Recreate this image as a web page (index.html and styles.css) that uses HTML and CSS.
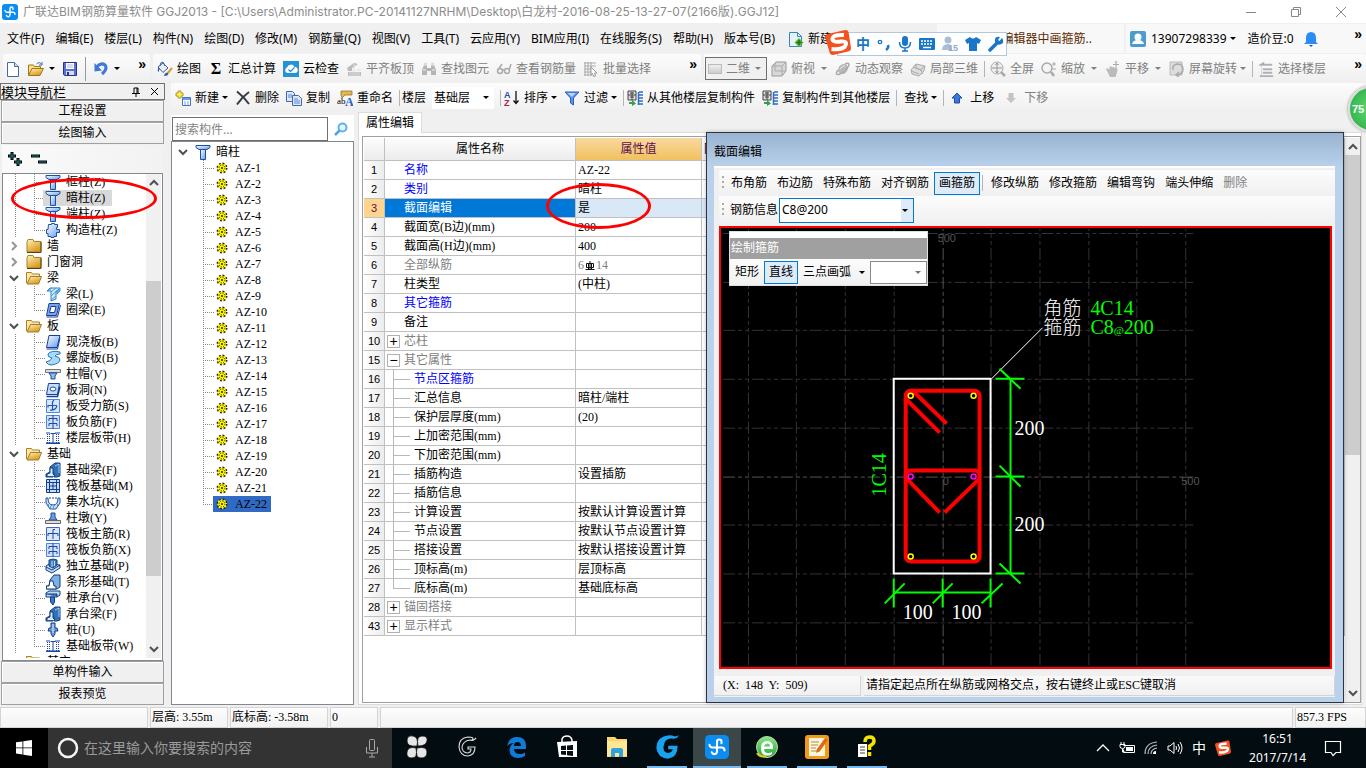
FILE: index.html
```html
<!DOCTYPE html>
<html lang="zh-CN">
<head>
<meta charset="utf-8">
<title>广联达BIM钢筋算量软件 GGJ2013</title>
<link rel="stylesheet" href="styles.css">
</head>
<body>
<svg class="defs" aria-hidden="true">
  <defs>
    <linearGradient id="gb" x1="0" y1="0" x2="1" y2="1"><stop offset="0" stop-color="#fff"/><stop offset="1" stop-color="#5f9af0"/></linearGradient>
    <linearGradient id="gy" x1="0" y1="0" x2="0.6" y2="1"><stop offset="0" stop-color="#fff3b8"/><stop offset="1" stop-color="#d9981c"/></linearGradient>
    <linearGradient id="gg" x1="0" y1="0" x2="0" y2="1"><stop offset="0" stop-color="#8be58a"/><stop offset="1" stop-color="#22a838"/></linearGradient>
  </defs>
  <symbol id="logo" viewBox="0 0 16 16"><rect width="16" height="16" rx="3" fill="#0a8cf0"/><path d="M11 5.500V4.500a1.500 1.500 0 0 0-3 0V11a1.800 1.800 0 0 1-3.500 .5M3 6.500a2 2 0 0 0 2 1.800h6a2 2 0 0 1 2 2" fill="none" stroke="#fff" stroke-width="1.400" stroke-linecap="round"/></symbol>
  <symbol id="new" viewBox="0 0 16 16"><path d="M2.500 1.500h7l4 4v10h-11z" fill="#fff" stroke="#456a9c"/><path d="M9.500 1.500v4h4" fill="#cfe0f5" stroke="#456a9c"/></symbol>
  <symbol id="open" viewBox="0 0 16 16"><path d="M.5 14V4h5l1 1.500h6V8" fill="#f7e08c" stroke="#a07618"/><path d="M.5 14.500L4 7.500h11.500l-3.500 7z" fill="url(#gy)" stroke="#a07618"/><path d="M8.500 3q3-3 5 .5m.5-2.500v3h-3" fill="none" stroke="#3b6aa8"/></symbol>
  <symbol id="save" viewBox="0 0 16 16"><path d="M1.500 1.500h13v13h-12l-1-1z" fill="#5a6fd0" stroke="#26348f"/><path d="M4 2h8v6H4z" fill="#fff"/><path d="M5 4h6M5 6h6" stroke="#aab4e8"/><path d="M4 10h8v4H4z" fill="#d5daf5"/><path d="M5 11h2v3H5z" fill="#26348f"/></symbol>
  <symbol id="undo" viewBox="0 0 16 16"><path d="M3.500 6Q8 1 12 4q3 4-3 9" fill="none" stroke="#3f78d8" stroke-width="3"/><path d="M1.500 2v8.500l7.500-1z" fill="#3f78d8"/></symbol>
  <symbol id="paint" viewBox="0 0 16 16"><path d="M1 6l5-4 5 5-5 4.500z" fill="#e6eefb" stroke="#3b5f95"/><path d="M3 5q0-4 3-4l2 4" fill="none" stroke="#3b5f95"/><path d="M2 7q-1 3 0 3" stroke="#2458c8" fill="none" stroke-width="1.500"/><path d="M15 7l-5 6" stroke="#d9a02c" stroke-width="2"/><path d="M7 15q1-4 4-3 1 3-4 3z" fill="#2c5bb8"/></symbol>
  <symbol id="cloud" viewBox="0 0 16 16"><rect width="16" height="16" fill="#2392d9"/><path d="M4 12a3 3 0 0 1 0-5.500 4 4 0 0 1 7.500-.5A3 3 0 0 1 12 12z" fill="#fff"/><path d="M5.500 8.500l2 2 4-4" stroke="#2392d9" stroke-width="1.300" fill="none"/></symbol>
  <symbol id="align" viewBox="0 0 16 16"><path d="M1 7l7-5 4 1-6 4v3H2zM2 11h13v4H2z" fill="#bbb"/><path d="M3 12h11M3 14h11M8 3v8M11 9h4" stroke="#ddd"/></symbol>
  <symbol id="bino" viewBox="0 0 16 16"><path d="M1 14V9l2-5h3v3h4V4h3l2 5v5h-5v-4H6v4z" fill="#b5b5b5"/><path d="M3 2h3v2H3zM10 2h3v2h-3zM2 9h3M11 9h3" fill="#bbb" stroke="#eee"/></symbol>
  <symbol id="glass" viewBox="0 0 16 16"><g fill="none" stroke="#aaa" stroke-width="1.500"><circle cx="4" cy="10" r="2.500"/><circle cx="11" cy="10" r="2.500"/><path d="M6 9h3M2 9l4-6M13 9l2-6"/></g></symbol>
  <symbol id="batch" viewBox="0 0 16 16"><path d="M1 2h12M1 5h12M1 8h8M1 11h8M1 14h8M2 1v14M5 1v14M8 1v14" stroke="#aaa"/><path d="M8 6l6 6-2.500 0 1 3-2 .5-1-3-1.500 1z" fill="#fff" stroke="#999"/></symbol>
  <symbol id="cube" viewBox="0 0 16 16"><path d="M1 5l4-4h10v9l-4 5H1z" fill="#d8d8d8" stroke="#999"/><path d="M1 5h10v10M11 5l4-4M4 2v8h10" fill="none" stroke="#aaa"/></symbol>
  <symbol id="orbit" viewBox="0 0 16 16"><ellipse cx="8" cy="8" rx="4.500" ry="5.500" transform="rotate(40 8 8)" fill="#b8b8b8"/><path d="M3 9Q-1 15 5 13T14 4q0-3-4-1" fill="none" stroke="#aaa" stroke-width="1.500"/><path d="M5 8q3-4 5-3" stroke="#eee" fill="none"/></symbol>
  <symbol id="part" viewBox="0 0 16 16"><path d="M1 9l5-6 9 2-1 5-5 5-7-2z" fill="#ddd" stroke="#aaa"/><path d="M3 6l8 3 2 4M6 3v4l5 2 3-4M1 10l8 3" fill="none" stroke="#aaa"/></symbol>
  <symbol id="full" viewBox="0 0 16 16"><circle cx="7" cy="7" r="6" fill="#eee" stroke="#aaa"/><path d="M7 2v10M2 7h10M5.500 4L7 2l1.500 2M5.500 10L7 12l1.500-2" stroke="#999" fill="none"/><path d="M11 11l4 4" stroke="#aaa" stroke-width="2.500"/></symbol>
  <symbol id="zoom" viewBox="0 0 16 16"><circle cx="6" cy="7" r="5" fill="#f4f4f4" stroke="#aaa" stroke-width="1.500"/><path d="M10 11l3 4" stroke="#aaa" stroke-width="2.500"/><path d="M11 3h4M13 1v4M11 8h4" stroke="#aaa"/></symbol>
  <symbol id="pan" viewBox="0 0 16 16"><path d="M1 8q2-2 3.500 1V6q2-1.500 2.500 .5 2-1 2.500 .5 3-1 3 2l-1 4-1 3H5z" fill="#bbb"/><path d="M11 0v7M8 3.500h6M10 1.500L11 .5l1 1" stroke="#aaa" fill="none"/></symbol>
  <symbol id="rotate" viewBox="0 0 16 16"><path d="M1 1h12v13H1z" fill="#ddd" stroke="#bbb"/><path d="M4 9q-1-5 4-6 6 0 6 5t-6 6m2-3l-3 3 3 2" fill="none" stroke="#aaa" stroke-width="1.500"/></symbol>
  <symbol id="floors" viewBox="0 0 16 16"><path d="M1 4l5-3v2h8v1.500H1zM5 7.500h9V9H5zM5 11h9v1.500H5zM2 14.500h13V16H2zM3.500 5v10" fill="#aaa" stroke="#bbb" stroke-width=".5"/></symbol>
  <symbol id="add" viewBox="0 0 16 16"><path d="M3 1h3v2h2v3H6v2H3V6H1V3h2z" fill="#ffe94f" stroke="#a38612" stroke-width=".8"/><path d="M7.500 7.500h8v8h-8z" fill="#fff" stroke="#4273c5"/><path d="M8 8h7v2H8z" fill="#6f9ae6"/><path d="M9 12h5M9 14h5" stroke="#7ea2e0" stroke-dasharray="2 1"/></symbol>
  <symbol id="del" viewBox="0 0 16 16"><path d="M2 1.500Q9 7 14 14M14 2Q7 7 2 14.500" fill="none" stroke="#333a48" stroke-width="2"/></symbol>
  <symbol id="copy" viewBox="0 0 16 16"><g fill="#dce9fb" stroke="#3e67b0"><path d="M.5 1.500h6l2 2v8h-8z"/><path d="M6.500 5.500h6l3 3v7h-9z"/></g><path d="M2 5h4M2 7h4M8 9h4M8 11h6M8 13h6" stroke="#5f86c9"/></symbol>
  <symbol id="floorcopy" viewBox="0 0 16 16"><path d="M1 1h8v9H1z" fill="#ddd" stroke="#444"/><path d="M3 3h4M1 5h8M3 7h4M5 2v8" stroke="#444"/><path d="M12 2h4M12 5h4M12 8h4M12 11h4M12 14h4M11.500 2v13" stroke="#2f6fc5" stroke-width="1.500"/><path d="M2 12h3v-2l4 3.500L5 16v-2H2z" fill="#2fa04e"/></symbol>
  <symbol id="funnel" viewBox="0 0 16 16"><path d="M1 2h14L9.500 8v7l-3-2V8z" fill="#5b92ec" stroke="#2a5fc2"/><path d="M3.500 3h8L8 7z" fill="#b9d3fa"/></symbol>
  <symbol id="up" viewBox="0 0 12 12"><path d="M6 1l5 5H8.500v5h-5V6H1z" fill="#3a78e0" stroke="#1f4ea8"/></symbol>
  <symbol id="down" viewBox="0 0 12 12"><path d="M6 11L1 6h2.500V1h5v5H11z" fill="#c4c4c4"/></symbol>
  <symbol id="newdoc" viewBox="0 0 16 16"><path d="M1.500 1.500h8l4 4v10h-12z" fill="#e5f3fd" stroke="#3b84c0"/><path d="M9.500 1.500v4h4" fill="none" stroke="#3b84c0"/><path d="M11 7l4.500 4.500L11 16l-4.500-4.500z" fill="#59b82c"/><path d="M11 9v5M8.500 11.500h5" stroke="#267012" stroke-width="1.500"/></symbol>
  <symbol id="search" viewBox="0 0 16 16"><circle cx="9.500" cy="6.500" r="4" fill="#e8f6ff" stroke="#5cb2ee" stroke-width="2"/><path d="M6.500 9.500L2 14" stroke="#4ba5e6" stroke-width="2.500"/></symbol>
  <symbol id="col" viewBox="0 0 16 16"><path d="M1 1.500h14v2l-3 2H4l-3-2z" fill="url(#gb)" stroke="#1d4f9e"/><path d="M5.500 5.500h5v10h-5z" fill="url(#gb)" stroke="#1d4f9e"/></symbol>
  <symbol id="gcol" viewBox="0 0 16 16"><path d="M3.500 2.500h3v-1h3v1h3v3h-1v2h3v3h-3v4H9v1H6v-1H3v-3H1.500v-4H3z" fill="url(#gb)" stroke="#1d4f9e"/></symbol>
  <symbol id="folder" viewBox="0 0 16 16"><path d="M1 3.500l1-2h5l1 2h7v10.500H1z" fill="url(#gy)" stroke="#a8812a"/><path d="M15 4v10.500H1" fill="none" stroke="#54411a"/></symbol>
  <symbol id="fopen" viewBox="0 0 16 16"><path d="M.5 13V2.500h5l1 1.500h7V7" fill="#fbe7a0" stroke="#a8812a"/><path d="M1 14l3.500-7.500h11L12.500 14z" fill="url(#gy)" stroke="#a07c24"/></symbol>
  <symbol id="beam" viewBox="0 0 16 16"><path d="M2 5l3-3h10l-3 3h-1v8l-5 2V5z" fill="#d2e9fc" stroke="#2b83c6"/><path d="M3 5l4-3M6 6l5-4M6 10l8-7M6 14l5-4M12 5l3-3v3l-3 3z" stroke="#3f97d8" fill="#6bb4ea"/></symbol>
  <symbol id="ring" viewBox="0 0 16 16"><path d="M4 1.500h10.500l-3 12H1.500z" fill="#7aa5ec" stroke="#153e9b"/><path d="M6 4.500h5l-1.500 6H4.500z" fill="#fff" stroke="#153e9b"/><path d="M1.500 15h11l3-12" fill="none" stroke="#153e9b"/></symbol>
  <symbol id="slab" viewBox="0 0 16 16"><path d="M4 1.500h11l-3 12H1.500z" fill="url(#gb)" stroke="#153e9b"/><path d="M1.500 15h11l2.500-11" fill="none" stroke="#153e9b"/></symbol>
  <symbol id="spiral" viewBox="0 0 16 16"><path d="M15 2Q6 0 3 4q-1 3 4 4-1 3-6 4 2 3 5 3 8-1 9-5 0-3-5-4 1-2 5-2z" fill="#a9dafc" stroke="#1e79ba"/></symbol>
  <symbol id="cap" viewBox="0 0 16 16"><path d="M.5 3.500h15v3H.5z" fill="#ddd" stroke="#777"/><path d="M4 7h8l-2 3v3H6v-3z" fill="#90b9ee" stroke="#1b4ba0"/></symbol>
  <symbol id="hole" viewBox="0 0 16 16"><path d="M3.500 1.500h11l-2 11H1.500z" fill="#c4ddfa" stroke="#153e9b"/><ellipse cx="8" cy="7" rx="3" ry="2" fill="#fff" stroke="#1b4ba0"/><path d="M1.500 14.500h11l2.500-10" fill="none" stroke="#153e9b" stroke-width="1.500"/></symbol>
  <symbol id="bar1" viewBox="0 0 16 16"><path d="M1.500 1.500h13v13h-13z" fill="#d7e6fb" stroke="#5384db"/><path d="M9 2L7.500 4V12M3 9.500V7.500h9M5 12q5 1 7-4" fill="none" stroke="#1a56b5" stroke-width="1.200"/></symbol>
  <symbol id="bar2" viewBox="0 0 16 16"><path d="M1.500 1.500h13v13h-13z" fill="#cfe0fa" stroke="#5384db"/><path d="M8 1v14M4 7V4.500h8V7M4 12V9.500h8V12" fill="none" stroke="#1a46a5"/></symbol>
  <symbol id="strip" viewBox="0 0 16 16"><path d="M1 12h14v2H1z" fill="#6d97e0"/><path d="M1 3h4M10 3h5M1 13.500h14M8 4v9M5.500 3.500h5" stroke="#1a46a5"/><path d="M2.500 4v9M4.500 4v9M11.500 4v9M13.500 4v9" stroke="#1a46a5" stroke-dasharray="1 1"/></symbol>
  <symbol id="fbeam" viewBox="0 0 16 16"><path d="M1 15V12l4-2V5l5-4h5v13l-3 1H9v-4l-1-1v5z" fill="#2f72b8" stroke="#123f7f"/><path d="M2 14v-2l3-1V6h3v6l2 2" fill="#d9ebfb" stroke="#123f7f"/><path d="M10 4l4-2v9" fill="none" stroke="#a5cff5"/></symbol>
  <symbol id="raft" viewBox="0 0 16 16"><path d="M1.500 1.500h13v13h-13z" fill="#c6dcf8" stroke="#123f8f"/><path d="M4.500 1v14M11.500 1v14M1 4.500h14M1 11.500h14M8 4v8M4 8h8" stroke="#123f8f"/></symbol>
  <symbol id="pit" viewBox="0 0 16 16"><path d="M1 4h2q0 7 5 7t5-7h2v5l-4 6H5L1 9z" fill="#c6dcf8" stroke="#1d58a8"/><path d="M4 4h8" stroke="#123f8f" stroke-dasharray="2 1"/><path d="M3 11h10M5 13h6" stroke="#1d58a8" stroke-dasharray="1 2"/></symbol>
  <symbol id="pier" viewBox="0 0 16 16"><path d="M6 3h4v4l2 3H4l2-3z" fill="#6b9ae0" stroke="#1b4ba0"/><path d="M.5 10.500h15v3H.5z" fill="#ddd" stroke="#666"/></symbol>
  <symbol id="rmain" viewBox="0 0 16 16"><path d="M1.500 1.500h13v13h-13z" fill="#dbe8fc" stroke="#3a68c8"/><path d="M10 3.500H8V13M3 10V7.500h10V10" fill="none" stroke="#1a46a5"/></symbol>
  <symbol id="iso" viewBox="0 0 16 16"><path d="M1 8l3-2 11 1v3l-8 5-6-3z" fill="#bfdcf8" stroke="#123f7f"/><path d="M4 2l4-1 4 1v5l-4 3-4-2z" fill="#3b78be" stroke="#123f7f"/><path d="M7 3v6M9.500 3v5" fill="none" stroke="#bfdcf8"/><path d="M1 9l6 3 8-5" fill="none" stroke="#123f7f"/></symbol>
  <symbol id="stripf" viewBox="0 0 16 16"><path d="M1.500 15v-3H4l1-6 4-5h6l0 12-3 2z" fill="#7fb0e6" stroke="#123f7f"/><path d="M1.500 15v-3H4l1-5h3l1 5h2v3z" fill="#fff" stroke="#123f7f"/></symbol>
  <symbol id="pcap" viewBox="0 0 16 16"><path d="M1 3l3-2h11v4l-3 2H1z" fill="#bcd9f8" stroke="#123f7f"/><path d="M1 4h11v3M5.500 7h4v5L8 15l-2.500-3z" fill="#3b78be" stroke="#123f7f"/></symbol>
  <symbol id="pile" viewBox="0 0 16 16"><path d="M6 1h4v5h2l1 3h-3v3l-2 3-2-3V9H3l1-3h2z" fill="#6f9fe0" stroke="#123f7f"/><path d="M8 2v9" stroke="#d8e8fa"/></symbol>
  <symbol id="gear" viewBox="0 0 12 12"><circle cx="6" cy="6" r="4.800" fill="#ff0" stroke="#222" stroke-width="1.400" stroke-dasharray="1.900 1.870"/><circle cx="6" cy="6" r="3" fill="#fff200" stroke="#333000" stroke-width="1" stroke-dasharray="1.200 1.150"/><circle cx="6" cy="6" r="1" fill="#222"/></symbol>
  <symbol id="chev" viewBox="0 0 10 10"><path d="M1 3l4 4 4-4" fill="none" stroke="#505050" stroke-width="2"/></symbol>
  <symbol id="sogou" viewBox="0 0 26 26"><path d="M3 5L20 1q3-.5 3.500 2L26 19q0 3-3 3.500L8 26q-3 0-3.500-3L0 8q0-2.500 3-3z" fill="#f4511e"/><path d="M19 6Q8 5.500 7.500 9.500t8 3 4 5.500Q15 21 6.500 20" fill="none" stroke="#fff" stroke-width="4"/></symbol>
</svg>

<header class="titlebar">
  <svg class="i16"><use href="#logo"/></svg>
  <h1>广联达BIM钢筋算量软件 GGJ2013 - [C:\Users\Administrator.PC-20141127NRHM\Desktop\白龙村-2016-08-25-13-27-07(2166版).GGJ12]</h1>
  <div class="winbtns">
    <button aria-label="最小化"><svg width="12" height="12"><path d="M1 6.500h10" stroke="#888"/></svg></button>
    <button aria-label="还原"><svg width="12" height="12"><path d="M1.500 3.500h7v7h-7zM3.500 3.500v-2h7v7h-2" fill="none" stroke="#888"/></svg></button>
    <button aria-label="关闭"><svg width="12" height="12"><path d="M1 1l10 10M11 1L1 11" stroke="#888"/></svg></button>
  </div>
</header>

<div class="menurow">
  <nav class="menu">
    <button>文件(F)</button><button>编辑(E)</button><button>楼层(L)</button><button>构件(N)</button><button>绘图(D)</button><button>修改(M)</button><button>钢筋量(Q)</button><button>视图(V)</button><button>工具(T)</button><button>云应用(Y)</button><button>BIM应用(I)</button><button>在线服务(S)</button><button>帮助(H)</button><button>版本号(B)</button>
  </nav>
  <button class="tb newchange"><svg class="i16"><use href="#newdoc"/></svg>新建</button>
  <div class="notice"><a href="#">编辑器中画箍筋..</a></div>
  <div class="account">
    <svg class="i16" viewBox="0 0 16 16"><rect width="16" height="16" rx="2" fill="#4a9cce"/><circle cx="8" cy="6" r="3.500" fill="#fff"/><path d="M2 13q1-4 6-4t6 4z" fill="#fff"/></svg>
    <button class="dd">13907298339</button><span>造价豆:0</span>
    <svg class="i16" viewBox="0 0 16 16"><path d="M8 1q5 0 5 6v4l2 2H1l2-2V7q0-6 5-6z" fill="#2b8cf5"/><path d="M6 14h4l-2 2z" fill="#1b5fb5"/></svg>
    <button class="more">»</button>
  </div>
</div>

<div class="toolrow">
  <div class="bar file">
    <button aria-label="新建"><svg class="i16"><use href="#new"/></svg></button>
    <button class="dd" aria-label="打开"><svg class="i16"><use href="#open"/></svg></button>
    <button aria-label="保存"><svg class="i16"><use href="#save"/></svg></button>
    <i class="sep"></i>
    <button class="dd" aria-label="撤销"><svg class="i16"><use href="#undo"/></svg></button>
    <button class="more">»</button>
  </div>
  <div class="bar draw">
    <button class="tb"><svg class="i16"><use href="#paint"/></svg>绘图</button>
    <button class="tb"><b class="sigma">Σ</b>汇总计算</button>
    <button class="tb"><svg class="i16"><use href="#cloud"/></svg>云检查</button>
    <button class="tb off"><svg class="i16"><use href="#align"/></svg>平齐板顶</button>
    <button class="tb off"><svg class="i16"><use href="#bino"/></svg>查找图元</button>
    <button class="tb off"><svg class="i16"><use href="#glass"/></svg>查看钢筋量</button>
    <button class="tb off"><svg class="i16"><use href="#batch"/></svg>批量选择</button>
    <button class="more">»</button>
  </div>
  <div class="bar view">
    <span class="combo dim"><i></i><select aria-label="视图维度"><option>二维</option></select></span>
    <button class="tb off dd"><svg class="i16"><use href="#cube"/></svg>俯视</button>
    <button class="tb off"><svg class="i16"><use href="#orbit"/></svg>动态观察</button>
    <button class="tb off"><svg class="i16"><use href="#part"/></svg>局部三维</button>
    <i class="sep"></i>
    <button class="tb off"><svg class="i16"><use href="#full"/></svg>全屏</button>
    <button class="tb off dd"><svg class="i16"><use href="#zoom"/></svg>缩放</button>
    <button class="tb off dd"><svg class="i16"><use href="#pan"/></svg>平移</button>
    <button class="tb off dd tight"><svg class="i16"><use href="#rotate"/></svg>屏幕旋转</button>
    <i class="sep"></i>
    <button class="tb off"><svg class="i16"><use href="#floors"/></svg>选择楼层</button>
    <button class="more">»</button>
  </div>
</div>

<main class="main">
  <aside class="nav">
    <div class="navhead"><span>模块导航栏</span>
      <button aria-label="固定"><svg width="10" height="10"><path d="M3 1h4v5M3 1v5M1 6.500h8M5 7v3M6 1v5" stroke="#000" fill="none"/></svg></button>
      <button aria-label="关闭"><svg width="9" height="9"><path d="M1 1l7 7M8 1L1 8" stroke="#000"/></svg></button>
    </div>
    <button class="navbtn">工程设置</button>
    <button class="navbtn">绘图输入</button>
    <div class="navtools">
      <button aria-label="全部展开"><svg width="17" height="16"><path d="M5 1v8M1 5h8M11 7v8M7 11h8" stroke="#000" stroke-width="3"/><path d="M5 2v6M2 5h6M11 8v6M8 11h6" stroke="#0b8b80"/></svg></button>
      <button aria-label="全部折叠"><svg width="17" height="16"><path d="M1 5h9M8 11h9" stroke="#000" stroke-width="3"/><path d="M2 5h7M9 11h7" stroke="#0b8b80"/></svg></button>
    </div>
    <div class="treebox">
      <ul class="tree">
        <li class="leaf"><svg class="i16"><use href="#col"/></svg>框柱<span class="en">(Z)</span></li>
        <li class="leaf cur"><svg class="i16"><use href="#col"/></svg>暗柱<span class="en">(Z)</span></li>
        <li class="leaf"><svg class="i16"><use href="#col"/></svg>端柱<span class="en">(Z)</span></li>
        <li class="leaf last"><svg class="i16"><use href="#gcol"/></svg>构造柱<span class="en">(Z)</span></li>
        <li class="group shut"><svg class="exp"><use href="#chev"/></svg><svg class="i16"><use href="#folder"/></svg>墙</li>
        <li class="group shut"><svg class="exp"><use href="#chev"/></svg><svg class="i16"><use href="#folder"/></svg>门窗洞</li>
        <li class="group"><svg class="exp"><use href="#chev"/></svg><svg class="i16"><use href="#fopen"/></svg>梁</li>
        <li class="leaf"><svg class="i16"><use href="#beam"/></svg>梁<span class="en">(L)</span></li>
        <li class="leaf last"><svg class="i16"><use href="#ring"/></svg>圈梁<span class="en">(E)</span></li>
        <li class="group"><svg class="exp"><use href="#chev"/></svg><svg class="i16"><use href="#fopen"/></svg>板</li>
        <li class="leaf"><svg class="i16"><use href="#slab"/></svg>现浇板<span class="en">(B)</span></li>
        <li class="leaf"><svg class="i16"><use href="#spiral"/></svg>螺旋板<span class="en">(B)</span></li>
        <li class="leaf"><svg class="i16"><use href="#cap"/></svg>柱帽<span class="en">(V)</span></li>
        <li class="leaf"><svg class="i16"><use href="#hole"/></svg>板洞<span class="en">(N)</span></li>
        <li class="leaf"><svg class="i16"><use href="#bar1"/></svg>板受力筋<span class="en">(S)</span></li>
        <li class="leaf"><svg class="i16"><use href="#bar2"/></svg>板负筋<span class="en">(F)</span></li>
        <li class="leaf last"><svg class="i16"><use href="#strip"/></svg>楼层板带<span class="en">(H)</span></li>
        <li class="group"><svg class="exp"><use href="#chev"/></svg><svg class="i16"><use href="#fopen"/></svg>基础</li>
        <li class="leaf"><svg class="i16"><use href="#fbeam"/></svg>基础梁<span class="en">(F)</span></li>
        <li class="leaf"><svg class="i16"><use href="#raft"/></svg>筏板基础<span class="en">(M)</span></li>
        <li class="leaf"><svg class="i16"><use href="#pit"/></svg>集水坑<span class="en">(K)</span></li>
        <li class="leaf"><svg class="i16"><use href="#pier"/></svg>柱墩<span class="en">(Y)</span></li>
        <li class="leaf"><svg class="i16"><use href="#rmain"/></svg>筏板主筋<span class="en">(R)</span></li>
        <li class="leaf"><svg class="i16"><use href="#bar2"/></svg>筏板负筋<span class="en">(X)</span></li>
        <li class="leaf"><svg class="i16"><use href="#iso"/></svg>独立基础<span class="en">(P)</span></li>
        <li class="leaf"><svg class="i16"><use href="#stripf"/></svg>条形基础<span class="en">(T)</span></li>
        <li class="leaf"><svg class="i16"><use href="#pcap"/></svg>桩承台<span class="en">(V)</span></li>
        <li class="leaf"><svg class="i16"><use href="#fbeam"/></svg>承台梁<span class="en">(F)</span></li>
        <li class="leaf"><svg class="i16"><use href="#pile"/></svg>桩<span class="en">(U)</span></li>
        <li class="leaf last"><svg class="i16"><use href="#strip"/></svg>基础板带<span class="en">(W)</span></li>
        <li class="group"><svg class="exp"></svg><svg class="i16"><use href="#fopen"/></svg>其它</li>
      </ul>
      <div class="scroll"><svg class="exp flip"><use href="#chev"/></svg><i class="thumb navthumb"></i><svg class="exp"><use href="#chev"/></svg></div>
    </div>
    <button class="navbtn">单构件输入</button>
    <button class="navbtn">报表预览</button>
  </aside>

  <section class="work">
    <div class="bar comp">
      <button class="tb dd tight"><svg class="i16"><use href="#add"/></svg>新建</button>
      <button class="tb"><svg class="i16"><use href="#del"/></svg>删除</button>
      <button class="tb"><svg class="i16"><use href="#copy"/></svg>复制</button>
      <button class="tb"><svg class="i16" viewBox="0 0 16 16"><path d="M4 1h11v4H8L5 8l-1-3z" fill="#e3b84d" stroke="#8a671b" stroke-width=".7"/><text x="0" y="14" font-size="9" font-family="Liberation Serif">ab</text><text x="8" y="15.500" font-size="12" font-weight="bold" fill="#245dc7" font-family="Liberation Serif">A</text></svg>重命名</button>
      <i class="sep"></i>
      <label class="floor" for="floor">楼层</label>
      <span class="combo flat"><select id="floor"><option>基础层</option></select></span>
      <i class="sep"></i>
      <button class="tb dd tight"><svg class="i16" viewBox="0 0 16 16"><text x="0" y="7.500" font-size="9" font-weight="bold" fill="#244db0" font-family="Liberation Sans">A</text><text x="0" y="15.500" font-size="9" font-weight="bold" fill="#a2284a" font-family="Liberation Sans">Z</text><path d="M12 1v12M9.500 10.500l2.500 3 2.500-3" fill="none" stroke="#111" stroke-width="1.300"/></svg>排序</button>
      <button class="tb dd tight"><svg class="i16"><use href="#funnel"/></svg>过滤</button>
      <i class="sep"></i>
      <button class="tb"><svg class="i16"><use href="#floorcopy"/></svg>从其他楼层复制构件</button>
      <button class="tb"><svg class="i16"><use href="#floorcopy"/></svg>复制构件到其他楼层</button>
      <i class="sep"></i>
      <button class="tb dd tight plain">查找</button>
      <i class="sep"></i>
      <button class="tb move"><svg class="i12"><use href="#up"/></svg>上移</button>
      <button class="tb move off"><svg class="i12"><use href="#down"/></svg>下移</button>
    </div>

    <div class="panes">
      <section class="complist">
        <div class="find"><input type="text" aria-label="搜索构件" placeholder="搜索构件..."><button aria-label="搜索"><svg class="i16"><use href="#search"/></svg></button></div>
        <ul class="items">
          <li class="root"><svg class="exp"><use href="#chev"/></svg><svg class="i16"><use href="#col"/></svg>暗柱</li>
          <li><svg class="i12"><use href="#gear"/></svg><span>AZ-1</span></li>
          <li><svg class="i12"><use href="#gear"/></svg><span>AZ-2</span></li>
          <li><svg class="i12"><use href="#gear"/></svg><span>AZ-3</span></li>
          <li><svg class="i12"><use href="#gear"/></svg><span>AZ-4</span></li>
          <li><svg class="i12"><use href="#gear"/></svg><span>AZ-5</span></li>
          <li><svg class="i12"><use href="#gear"/></svg><span>AZ-6</span></li>
          <li><svg class="i12"><use href="#gear"/></svg><span>AZ-7</span></li>
          <li><svg class="i12"><use href="#gear"/></svg><span>AZ-8</span></li>
          <li><svg class="i12"><use href="#gear"/></svg><span>AZ-9</span></li>
          <li><svg class="i12"><use href="#gear"/></svg><span>AZ-10</span></li>
          <li><svg class="i12"><use href="#gear"/></svg><span>AZ-11</span></li>
          <li><svg class="i12"><use href="#gear"/></svg><span>AZ-12</span></li>
          <li><svg class="i12"><use href="#gear"/></svg><span>AZ-13</span></li>
          <li><svg class="i12"><use href="#gear"/></svg><span>AZ-14</span></li>
          <li><svg class="i12"><use href="#gear"/></svg><span>AZ-15</span></li>
          <li><svg class="i12"><use href="#gear"/></svg><span>AZ-16</span></li>
          <li><svg class="i12"><use href="#gear"/></svg><span>AZ-17</span></li>
          <li><svg class="i12"><use href="#gear"/></svg><span>AZ-18</span></li>
          <li><svg class="i12"><use href="#gear"/></svg><span>AZ-19</span></li>
          <li><svg class="i12"><use href="#gear"/></svg><span>AZ-20</span></li>
          <li><svg class="i12"><use href="#gear"/></svg><span>AZ-21</span></li>
          <li class="last picked"><svg class="i12"><use href="#gear"/></svg><span>AZ-22</span></li>
        </ul>
      </section>

      <section class="props">
        <button class="tab">属性编辑</button>
        <div class="page"><div class="gridbox">
          <table class="grid">
            <colgroup><col class="c1"><col class="c2"><col class="c3"><col></colgroup>
            <thead><tr><th></th><th>属性名称</th><th class="hot">属性值</th><th class="extra">附加</th></tr></thead>
            <tbody>
              <tr><th>1</th><td class="blue">名称</td><td><span class="en">AZ-22</span></td><td></td></tr>
              <tr><th>2</th><td class="blue">类别</td><td>暗柱</td><td></td></tr>
              <tr class="sel"><th>3</th><td>截面编辑</td><td>是</td><td></td></tr>
              <tr><th>4</th><td>截面宽<span class="en">(B</span>边<span class="en">)(mm)</span></td><td><span class="en">200</span></td><td></td></tr>
              <tr><th>5</th><td>截面高<span class="en">(H</span>边<span class="en">)(mm)</span></td><td><span class="en">400</span></td><td></td></tr>
              <tr><th>6</th><td class="gray">全部纵筋</td><td class="gray"><span class="en">6</span><svg class="rebar" viewBox="0 0 12 12"><path d="M2.500 3.500h7v4h-7zM6 1v9M1.500 9.500h9M4.500 3v6M7.500 3v6" fill="none" stroke="#111"/></svg><span class="en">14</span></td><td></td></tr>
              <tr><th>7</th><td>柱类型</td><td><span class="en">(</span>中柱<span class="en">)</span></td><td></td></tr>
              <tr><th>8</th><td class="blue">其它箍筋</td><td></td><td></td></tr>
              <tr><th>9</th><td>备注</td><td></td><td></td></tr>
              <tr><th>10</th><td class="gray node"><button>+</button>芯柱</td><td></td><td></td></tr>
              <tr><th>15</th><td class="gray node"><button>−</button>其它属性</td><td></td><td></td></tr>
              <tr class="sub"><th>16</th><td class="blue">节点区箍筋</td><td></td><td></td></tr>
              <tr class="sub"><th>17</th><td>汇总信息</td><td>暗柱<span class="en">/</span>端柱</td><td></td></tr>
              <tr class="sub"><th>18</th><td>保护层厚度<span class="en">(mm)</span></td><td><span class="en">(20)</span></td><td></td></tr>
              <tr class="sub"><th>19</th><td>上加密范围<span class="en">(mm)</span></td><td></td><td></td></tr>
              <tr class="sub"><th>20</th><td>下加密范围<span class="en">(mm)</span></td><td></td><td></td></tr>
              <tr class="sub"><th>21</th><td>插筋构造</td><td>设置插筋</td><td></td></tr>
              <tr class="sub"><th>22</th><td>插筋信息</td><td></td><td></td></tr>
              <tr class="sub"><th>23</th><td>计算设置</td><td>按默认计算设置计算</td><td></td></tr>
              <tr class="sub"><th>24</th><td>节点设置</td><td>按默认节点设置计算</td><td></td></tr>
              <tr class="sub"><th>25</th><td>搭接设置</td><td>按默认搭接设置计算</td><td></td></tr>
              <tr class="sub"><th>26</th><td>顶标高<span class="en">(m)</span></td><td>层顶标高</td><td></td></tr>
              <tr class="sub end"><th>27</th><td>底标高<span class="en">(m)</span></td><td>基础底标高</td><td></td></tr>
              <tr><th>28</th><td class="gray node"><button>+</button>锚固搭接</td><td></td><td></td></tr>
              <tr><th>43</th><td class="gray node"><button>+</button>显示样式</td><td></td><td></td></tr>
            </tbody>
          </table>
          <div class="scroll"><svg class="exp flip"><use href="#chev"/></svg><i class="thumb gridthumb"></i><svg class="exp"><use href="#chev"/></svg></div>
        </div></div>
      </section>
    </div>
  </section>

  <section class="dialog" role="dialog" aria-labelledby="dlg">
    <h2 id="dlg">截面编辑</h2>
    <div class="body">
      <div class="dbar">
        <i class="grip"></i>
        <button>布角筋</button><button>布边筋</button><button>特殊布筋</button><button>对齐钢筋</button><button class="on">画箍筋</button><i class="sep"></i><button>修改纵筋</button><button>修改箍筋</button><button>编辑弯钩</button><button>端头伸缩</button><button class="off">删除</button>
      </div>
      <div class="dbar info">
        <i class="grip"></i>
        <label for="rebar">钢筋信息</label>
        <span class="combo focus"><select id="rebar"><option>C8@200</option></select></span>
      </div>
      <div class="canvas">
        <svg viewBox="721 228 610 438" preserveAspectRatio="xMinYMin meet">
          <g stroke="#333" stroke-dasharray="12 3 4 3 4 3">
            <path d="M723 233.500h471M723 282.500h471M723 330.500h471M723 379.500h471M723 428.500h471M723 525.500h471M723 574.500h471M723 623.500h471"/>
            <path d="M748.500 666V229M796.500 666V229M845.500 666V229M894.500 666V229M991.500 666V229M1040.500 666V229M1089.500 666V229M1137.500 666V229M1186.500 666V229"/>
            <path d="M723 477.500h471M943.500 666V229" stroke="#555"/>
          </g>
          <g class="axis"><text x="938" y="242">500</text><text x="943" y="485">0</text><text x="1182" y="485">500</text></g>
          <path d="M894 379h97v195h-97z" fill="none" stroke="#fff" stroke-width="2"/>
          <path d="M992 379L1043 328" stroke="#fff"/>
          <g fill="none" stroke="red" stroke-width="4">
            <rect x="906" y="391" width="74" height="171" rx="5"/>
            <path d="M906 476q0-5 5-5h64q5 0 5 5M907 400l33 33M914 392l33 32M907 479l33 34M979 480l-34 33"/>
          </g>
          <g fill="none" stroke="#ff0" stroke-width="1.500"><circle cx="911" cy="396" r="2.500"/><circle cx="974" cy="396" r="2.500"/><circle cx="911" cy="557" r="2.500"/><circle cx="974" cy="557" r="2.500"/></g>
          <g fill="none" stroke="#f0f" stroke-width="1.500"><circle cx="911" cy="477" r="2.500"/><circle cx="974" cy="477" r="2.500"/></g>
          <g stroke="#0f0" stroke-width="2">
            <path d="M1011 379v195M996 379h29M996 477h29M996 574h29M894 593h97M894 579v29M943 579v29M991 579v29"/>
            <path d="M1000 369l21 20M1000 466l21 21M1000 564l21 20M885 604l20-20M933 604l20-20M982 604l21-20"/>
          </g>
          <g class="cad"><text x="1015" y="435">200</text><text x="1015" y="532">200</text><text x="903" y="620">100</text><text x="952" y="620">100</text>
          <text class="han" x="1044" y="315">角筋</text><text class="han" x="1044" y="334">箍筋</text>
          <g fill="#0f0"><text x="1091" y="315">4C14</text><text x="1091" y="334">C8<tspan class="at">@</tspan>200</text><text transform="translate(886 497) rotate(-90)">1C14</text></g></g>
        </svg>
        <div class="palette">
          <h3>绘制箍筋</h3>
          <div class="dbar"><button>矩形</button><button class="on">直线</button><button class="dd">三点画弧</button><span class="combo arc"><select aria-label="弧参数"><option></option></select></span></div>
        </div>
      </div>
      <div class="dstatus"><span class="en">(X:  148  Y:  509)</span><span class="hint">请指定起点所在纵筋或网格交点，按右键终止或<span class="en">ESC</span>键取消</span></div>
    </div>
  </section>
</main>

<footer class="status">
  <span class="s1"></span><span class="s2">层高<b class="en">: 3.55m</b></span><span class="s3">底标高<b class="en">: -3.58m</b></span><span class="s4"><b class="en">0</b></span><span class="s5"></span><span class="s6"><b class="en">857.3 FPS</b></span>
</footer>

<footer class="taskbar">
  <button class="start" aria-label="开始"><svg width="16" height="16"><path d="M0 2.300L6.500 1.400V7.500H0zM7.300 1.200L16 0v7.500H7.300zM0 8.300h6.500v6.200L0 13.600zM7.300 8.300H16V16l-8.700-1.300z" fill="#fff"/></svg></button>
  <div class="cortana"><svg width="22" height="22"><circle cx="11" cy="11" r="9" fill="none" stroke="#f4f4f4" stroke-width="2.500"/></svg><input type="text" aria-label="搜索" placeholder="在这里输入你要搜索的内容"><svg width="12" height="20"><rect x="3.500" y="1.500" width="5" height="11" rx="1" fill="none" stroke="#aaa"/><path d="M.5 9v6h11V9M6 15v4M3 19h6" fill="none" stroke="#aaa"/></svg></div>
  <div class="apps">
    <button aria-label="浏览器"><svg width="24" height="24" viewBox="0 0 24 24"><g fill="#e6e6e6" stroke="#111" stroke-width=".8"><path d="M12 11Q2 12 2 6t6-5 4 10z"/><path d="M13 11Q11 1 17 1t5 5-9 5z"/><path d="M12 13Q22 11 22 17t-6 6-4-10z"/><path d="M11 13Q13 23 7 23t-5-6 9-4z"/></g></svg></button>
    <button aria-label="广联达助手"><svg width="22" height="22" viewBox="0 0 22 22"><path d="M20 2q-1 2-4 2Q19 1 12 1 3 2 3 11q1 9 9 9 7-1 7-9h-7v2h3q0 4-4 4-5-1-5-6 1-6 8-7 3 1 5-1z" fill="none" stroke="#ddd" stroke-width="1.100"/></svg></button>
    <button aria-label="Edge"><svg width="22" height="22" viewBox="0 0 22 22"><path d="M1 10Q3 1 11 1q9 0 9 9v3H8q0 5 6 5 3 0 5-1.500V20q-3 2-7 2-8 0-8.500-8Q4 9 8 7q-4 0-7 3zM8 10h7q0-4-3.500-4T8 10z" fill="#0f7cdb" fill-rule="evenodd"/></svg></button>
    <button aria-label="应用商店"><svg width="22" height="24" viewBox="0 0 22 24"><path d="M1 7l20-1v16L3 22z" fill="#fff"/><path d="M6 8V4q1-3 5-3t5 4v3" fill="none" stroke="#fff" stroke-width="1.500"/><path d="M5 11l5-.5V15H5zM11 10.500l6-.5v5h-6zM5 16h5v4l-5-.5zM11 16h6v5l-6-.7z" fill="#071014"/></svg></button>
    <button aria-label="文件管理"><svg width="22" height="22" viewBox="0 0 22 22"><path d="M1 1h8l2 2h10v18H1z" fill="#fbd86c"/><path d="M1 5h20v15H1z" fill="#ffe694"/><path d="M5 21v-7q0-2 2-2h8q2 0 2 2v7h-4v-4H9v4z" fill="#2fa3dc"/></svg></button>
    <button class="run" aria-label="广联达"><svg width="26" height="26" viewBox="0 0 22 22"><path d="M21 1q-1 3-5 3-7-1-8 7 0 5 4 5 3 0 4-3h-4v-3h8q0 10-8 11Q3 20 2 12 2 2 13 1q3 0 4 1 2 0 4-1z" fill="#19a2ee"/></svg></button>
    <button class="run active" aria-label="钢筋算量"><svg width="24" height="24"><use href="#logo"/></svg></button>
    <button class="run" aria-label="360浏览器"><svg width="24" height="24" viewBox="0 0 24 24"><circle cx="12" cy="12" r="10.500" fill="url(#gg)" stroke="#b7dfa2"/><path d="M18 14H9q0 4 4 4 3 0 4-1v2q-2 2-6 1.500Q6 20 6 13q0-7 6.500-7 6 0 5.500 8zM9 11.500h6q0-3-2.500-3T9 11.500z" fill="#fff" fill-rule="evenodd"/><path d="M2 18Q5 23 11 21" stroke="#f0c419" fill="none" stroke-width="2"/></svg></button>
    <button class="run" aria-label="笔记"><svg width="24" height="24" viewBox="0 0 24 24"><rect width="24" height="24" rx="3" fill="#f39a18"/><path d="M4 3h16v18H4z" fill="#fff6dd"/><path d="M6 7h8M6 10h7M6 13h5M6 16h9" stroke="#a98a4a"/><path d="M20 3l-8 11-1 4 4-2 8-11z" fill="#e06a13"/></svg></button>
    <button class="run" aria-label="帮助"><svg width="24" height="24" viewBox="0 0 24 24"><path d="M3 9h9v13H3z" fill="#fff"/><path d="M5 12h5M5 15h5M5 18h5" stroke="#444"/><path d="M10 7q0-5 4.500-5T19 6q0 3-4.500 5v4M14.500 17v4" fill="none" stroke="#f5e400" stroke-width="3.500"/></svg></button>
  </div>
  <div class="tray">
    <svg width="14" height="14" viewBox="0 0 14 14"><path d="M1 10l6-6 6 6" fill="none" stroke="#fff" stroke-width="1.300"/></svg>
    <svg width="16" height="14" viewBox="0 0 16 14"><path d="M4.500 4.500h11v7h-11v-3M2 1v2M5 1v2M1 3.500h5v2q0 2-2.500 2T1 5.500zM3.500 8v3h3" fill="none" stroke="#fff"/><path d="M7 6h7v4H7z" fill="#fff"/></svg>
    <svg width="14" height="14" viewBox="0 0 14 14"><g fill="none" stroke="#bbb" stroke-width="1.200"><path d="M1 13Q1 2 13 1M4 13q0-8 9-9M7 13q0-5 6-6"/></g><path d="M9 13q0-3 3-3v3z" fill="#fff"/></svg>
    <svg width="16" height="14" viewBox="0 0 16 14"><path d="M1 5h2l4-3.500v11L3 9H1zM9 5q1 2 0 4M11 3q3 4 0 8M13 1q4 6 0 12" fill="none" stroke="#fff"/></svg>
    <span class="lang">中</span>
    <svg width="16" height="16"><use href="#sogou"/></svg>
    <time><span>16:51</span><span>2017/7/14</span></time>
    <svg width="18" height="18" viewBox="0 0 18 18"><path d="M1.500 2.500h15v11H12L9 16.500 7 13.500H1.500z" fill="none" stroke="#fff" stroke-width="1.200"/></svg>
  </div>
</footer>

<div class="ime">
  <svg class="s" width="26" height="26"><use href="#sogou"/></svg>
  <div class="imebar"><b>中</b>
    <svg width="14" height="16"><circle cx="3" cy="6" r="1.700" fill="none" stroke="#1a76c8" stroke-width="1.300"/><path d="M11 9q1 3-2 5" fill="none" stroke="#1a76c8" stroke-width="2.500"/></svg>
    <svg width="14" height="16"><rect x="4" y="0" width="6" height="10" rx="3" fill="#1a76c8"/><path d="M1.500 6q0 6 5.500 6t5.500-6M7 12v3M4 15h6" fill="none" stroke="#1a76c8" stroke-width="1.500"/></svg>
    <svg width="16" height="16"><rect y="2" width="16" height="12" rx="1" fill="#1a76c8"/><path d="M2 5h12M2 8h12" stroke="#fff" stroke-width="1.500" stroke-dasharray="2 1"/><path d="M4 11.500h8" stroke="#fff" stroke-width="1.500"/></svg>
    <svg width="16" height="16"><circle cx="6" cy="4" r="3.500" fill="#a9bfd8"/><path d="M0 14q0-6 6-6 4 0 4 6z" fill="#a9bfd8"/><text x="6" y="15" font-size="9" font-weight="bold" font-family="Liberation Sans" fill="#90aac8">15</text></svg>
    <svg width="16" height="16"><path d="M5 1q3 3 6 0l5 3-2 4-2-1v8H4V7L2 8 0 4z" fill="#1a76c8"/></svg>
    <svg width="16" height="16"><path d="M2 14l7-7" stroke="#1a76c8" stroke-width="3.500" stroke-linecap="round"/><path d="M14 2l-2.500 3-1.500-1 2-3q-6-1-5 5 3 5 8 1 1-3-1-5z" fill="#1a76c8"/></svg>
  </div>
</div>
<div class="ball">75</div>
<div class="ring ring-nav"></div>
<div class="ring ring-prop"></div>
</body>
</html>
```
FILE: styles.css
```css
* { box-sizing: border-box; }
html, body { height: 100%; }
body {
  margin: 0; display: flex; flex-direction: column; position: relative; overflow: hidden;
  background: #f0f0f0; color: #000;
  font: 12px/16px "Noto Sans", "Noto Sans CJK SC", sans-serif;
}
button { border: 0; padding: 0; margin: 0; background: none; font: inherit; color: inherit; white-space: nowrap; }
svg { display: block; flex: none; }
ul { list-style: none; margin: 0; padding: 0; }
h1, h2, h3 { margin: 0; font: inherit; }
.defs { position: absolute; width: 0; height: 0; }
.i16 { width: 16px; height: 16px; }
.i12 { width: 12px; height: 12px; }
.exp { width: 10px; height: 10px; }
.flip { transform: rotate(180deg); }
.en { font: 12px/16px "Liberation Serif", serif; }

.titlebar { height: 23px; background: #fff; display: flex; align-items: center; gap: 5px; padding-left: 2px; color: #8c8c8c; flex: none; }
.titlebar h1 { white-space: nowrap; flex: 1; font-family: Inter, "Noto Sans CJK SC", sans-serif; }
.winbtns { display: flex; gap: 33px; padding-right: 19px; }

.menurow { height: 31px; display: flex; align-items: center; flex: none; }
.menu { display: flex; gap: 11px; padding-left: 7px; }
.newchange { margin-left: 13px; }
.notice, .account { height: 29px; display: flex; align-items: center; background: #f8f8f8; }
.notice { margin-left: auto; width: 187px; justify-content: flex-end; padding-right: 32px; margin-right: 2px; }
.notice a { color: #5c2a00; text-decoration: none; }
.account { width: 240px; padding: 0 4px; gap: 5px; }
.account span { margin: 0 4px 0 3px; }

.more { margin-left: auto; font: bold 14px/16px "Liberation Sans", sans-serif; padding-bottom: 10px; }
.toolrow { height: 29px; display: flex; gap: 3px; padding-left: 3px; flex: none; }
.bar { display: flex; align-items: center; gap: 7px; background: linear-gradient(#fcfcfc, #efefef); border-radius: 2px; }
.file { width: 147px; padding: 0 0 0 2px; }
.draw { width: 548px; padding-left: 4px; }
.view { flex: 1; padding: 0 4px 0 1px; }
.file .more, .draw .more { padding-right: 4px; }
.tb { display: flex; align-items: center; gap: 4px; }
.off { color: #808080; }
.sigma { font: bold 16px/16px "Liberation Serif", serif; width: 16px; text-align: center; }
.sep { width: 1px; height: 16px; background: #b5b5b5; flex: none; }
.file .sep { height: 24px; background: #999; }
.view .sep { margin: 0 -2px 0 -1px; }
.dd { display: flex; align-items: center; }
.dd::after, .combo::after { content: ""; border: 3px solid transparent; border-top-color: currentColor; border-bottom: 0; margin: 0 4px 0 3px; }
.file .dd::after { margin: 0 0 0 5px; }
.tb.dd::after { margin: 0 1px 0 2px; }
.tb.tight::after { margin: 0 0 0 -1px; }
.combo { position: relative; display: flex; align-items: center; background: #fff; border: 1px solid #707070; }
.combo::after { position: absolute; right: 5px; margin: 0; pointer-events: none; }
.combo select { appearance: none; border: 0; background: none; font: inherit; color: inherit; padding: 0; margin: 0; width: 100%; outline: 0; }
.dim { width: 62px; height: 23px; background: #f0f0f0; color: #808080; padding-left: 2px; margin-right: -3px; }
.dim i { width: 14px; height: 10px; background: linear-gradient(#eee, #ccc); border: 1px solid #bbb; margin-right: 4px; flex: none; }

.main { flex: 1; min-height: 0; display: flex; position: relative; }
.nav { width: 165px; display: flex; flex-direction: column; padding-bottom: 2px; flex: none; }
.navhead { height: 17px; border: 1px solid #707070; display: flex; align-items: center; gap: 9px; padding-right: 5px; flex: none; }
.navhead span { font-size: 13px; line-height: 14px; flex: 1; }
.navbtn { height: 22px; flex: none; margin: 0 1px; background: #f0f0f0; border: 1px solid #a0a0a0; box-shadow: inset 1px 1px #fff; }
.navtools { height: 28px; margin: 1px 2px 0; padding: 2px 5px; display: flex; gap: 6px; align-items: center; background: linear-gradient(90deg, #fafafa, #f2f2f2); flex: none; }
.treebox { flex: 1; min-height: 0; margin: 0 2px; background: #fff; border: 1px solid #828790; padding-bottom: 2px; display: flex; overflow: hidden; }
.tree { flex: 1; overflow: hidden; }
.tree li { height: 16px; display: flex; align-items: center; white-space: nowrap; }
.tree .leaf {
  padding-left: 42px;
  background:
    repeating-linear-gradient(#888 0 1px, transparent 1px 2px) 12px 0 / 1px 100% no-repeat,
    repeating-linear-gradient(#888 0 1px, transparent 1px 2px) 31px 0 / 1px 100% no-repeat,
    repeating-linear-gradient(90deg, #888 0 1px, transparent 1px 2px) 31px 8px / 11px 1px no-repeat;
}
.tree .last { background-size: 1px 100%, 1px 8px, 11px 1px; }
.leaf .i16 { margin-right: 5px; }
.tree .cur {
  background:
    repeating-linear-gradient(#888 0 1px, transparent 1px 2px) 12px 0 / 1px 100% no-repeat,
    repeating-linear-gradient(#888 0 1px, transparent 1px 2px) 31px 0 / 1px 100% no-repeat,
    repeating-linear-gradient(90deg, #888 0 1px, transparent 1px 2px) 31px 8px / 9px 1px no-repeat,
    linear-gradient(#d9d9d9, #d9d9d9) 40px 0 / 69px 100% no-repeat;
}
.group { padding-left: 6px; }
.group .i16 { margin: 0 5px 0 7px; }
.shut .exp { transform: rotate(-90deg); opacity: .6; }
.scroll { width: 15px; background: #f0f0f0; display: flex; flex-direction: column; align-items: center; padding: 4px 0; flex: none; }
.treebox .scroll { margin-right: 1px; }
.thumb { width: 15px; background: #cdcdcd; }
.navthumb { height: 62%; margin: 93px 0 auto; }
.gridthumb { height: 300px; margin: 3px 0 auto; }

.work { flex: 1; min-width: 0; display: flex; flex-direction: column; padding-left: 6px; }
.comp { height: 29px; padding-left: 4px; flex: none; }
.floor { margin-left: -1px; }
.flat { width: 62px; height: 22px; border: 0; padding-left: 2px; margin-left: -1px; }
.comp .sep { margin: 0 -4px 0 -1px; }
.plain { padding-left: 4px; }
.move { gap: 7px; padding-left: 4px; }
.panes { flex: 1; min-height: 0; display: flex; gap: 4px; }
.complist { width: 183px; display: flex; flex-direction: column; padding: 3px 0 2px; flex: none; }
.find { display: flex; height: 26px; padding: 2px 1px 0; background: #fff; flex: none; }
.find input { flex: 1; min-width: 0; height: 24px; border: 1px solid #707070; padding: 0 2px; font: inherit; }
.find input::placeholder { color: #858585; }
.find button { width: 25px; display: flex; align-items: center; justify-content: center; }
.items { flex: 1; border: 1px solid #828790; background: #fff; padding-top: 2px; }
.items li {
  height: 16px; display: flex; align-items: center; padding-left: 41px;
  background:
    repeating-linear-gradient(#888 0 1px, transparent 1px 2px) 31px 0 / 1px 100% no-repeat,
    repeating-linear-gradient(90deg, #888 0 1px, transparent 1px 2px) 31px 8px / 11px 1px no-repeat;
  font: 12px/16px "Liberation Serif", serif;
}
.items .i12 { margin: 0 3px; }
.items li span { padding: 0 4px; }
.items .root { background: none; padding-left: 6px; font: inherit; }
.root .i16 { margin: 0 5px 0 7px; }
.items .last { background-size: 1px 8px, 11px 1px; }
.picked .i12, .picked span { background: #316ac5; }
.items .picked .i12 { height: 16px; width: 18px; padding: 2px 3px; margin: 0; }

.props { flex: 1; min-width: 0; display: flex; flex-direction: column; margin-right: 4px; padding-bottom: 2px; }
.tab { align-self: flex-start; height: 21px; margin-bottom: -1px; width: 64px; background: #fff; border: 1px solid #dcdcdc; border-bottom: 0; position: relative; flex: none; }
.page { flex: 1; min-height: 0; background: #fff; border: 1px solid #dcdcdc; padding: 3px 0 1px 3px; display: flex; }
.gridbox { flex: 1; min-width: 0; border: 1px solid #a0a0a0; padding: 1px 0 0 1px; display: flex; align-items: flex-start; }
.gridbox .scroll { align-self: stretch; }
.grid { table-layout: fixed; flex: 1; width: 0; border-collapse: separate; border-spacing: 0; }
.c1 { width: 21px; } .c2 { width: 191px; } .c3 { width: 126px; }
.grid th, .grid td { height: 19px; padding: 0 0 0 2px; border: solid #c0c0c0; border-width: 0 1px 1px 0; font-weight: 400; text-align: left; white-space: nowrap; overflow: hidden; line-height: 16px; }
.grid th { background: linear-gradient(90deg, #fff, #ececec); text-align: center; padding: 0; }
.grid tbody th { font: 11px/16px "Liberation Sans", sans-serif; }
.grid thead th { height: 23px; background: linear-gradient(#fdfdfd, #ececec); }
.grid thead .hot { background: linear-gradient(#f9d99f, #f1c15f); color: #5b1050; }
.grid thead .extra { text-align: left; padding-left: 2px; }
.grid td:nth-child(2) { padding-left: 19px; }
.grid td .en { line-height: 14px; }
.grid .blue { color: #00f; }
.gray { color: #808080; }
.rebar { display: inline-block; width: 12px; height: 12px; vertical-align: -3px; }
.grid .sel th { background: #ffd58d; color: #5b1050; }
.sel td { background: #d9e8f7; }
.sel td:nth-child(2) { background: #0078d7; color: #fff; }
.grid td.node { padding-left: 2px; }
.node button { width: 13px; height: 13px; border: 1px solid #b0b0b0; background: #fff; color: #000; font: 14px/11px "Liberation Sans", sans-serif; margin-right: 4px; vertical-align: middle; text-align: center; }
.grid .sub td:nth-child(2) {
  padding-left: 29px;
  background:
    linear-gradient(#b8b8b8, #b8b8b8) 8px 0 / 1px 100% no-repeat,
    linear-gradient(#b8b8b8, #b8b8b8) 8px 9px / 17px 1px no-repeat;
}
.grid .end td:nth-child(2) { background-size: 1px 9px, 17px 1px; }

.dialog { position: absolute; left: 706px; right: 22px; top: 49px; bottom: 4px; border: 1px solid #2b3440; background: linear-gradient(#99b4d1, #b9d1ea 34px); padding: 1px 8px 5px 7px; display: flex; flex-direction: column; box-shadow: 0 0 4px rgba(0, 0, 0, .25); }
.dialog h2 { height: 32px; line-height: 36px; flex: none; }
.body { flex: 1; min-height: 0; background: #f0f0f0; border-top: 2px solid #fff; display: flex; flex-direction: column; padding-top: 2px; }
.dbar { display: flex; align-items: center; height: 26px; flex: none; background: linear-gradient(#fcfcfc, #f0f0f0); }
.dbar button { padding: 0 4px; height: 23px; border: 1px solid transparent; }
.dbar .on { background: #deecf9; border-color: #0078d7; }
.dialog .body > .dbar { margin-left: 5px; }
.dbar .sep { margin: 0 3px 0 2px; }
.grip { width: 2px; height: 15px; margin: 0 2px 0 3px; background: repeating-linear-gradient(#aaa 0 2px, transparent 2px 5px); }
.info { height: 28px; }
.info label { padding-left: 4px; width: 53px; white-space: nowrap; }
.focus { width: 135px; height: 25px; border-color: #0078d7; padding-left: 2px; background: linear-gradient(90deg, #fff 121px, #deecf9 121px); }
.canvas { flex: 1; min-height: 0; margin: 2px 3px 0 5px; border: 2px solid #f00; background: #000; position: relative; overflow: hidden; }
.canvas > svg { width: 100%; height: 100%; }
.axis { fill: #555; font: 11px "Liberation Sans", sans-serif; }
.cad { fill: #fff; font: 20px "Liberation Serif", serif; }
.cad .han { font: 19px "Noto Sans CJK SC", sans-serif; font-weight: 300; }
.cad .at { font-size: 11px; }
.palette { position: absolute; left: 8px; top: 3px; width: 199px; background: #fff; border: 1px solid #e0e0e0; padding-top: 6px; }
.palette h3 { background: #a0a0a0; color: #fff; height: 21px; line-height: 20px; padding-left: 1px; }
.palette .dd::after { margin: 0 0 0 8px; }
.arc { width: 58px; height: 23px; margin-left: auto; color: #777; border-color: #888; }
.dstatus { height: 28px; padding-top: 7px; display: flex; gap: 3px; flex: none; }
.dstatus > span { height: 20px; line-height: 18px; border: solid #d4d4d4; border-width: 0 1px 1px 0; }
.dstatus > .en { width: 147px; padding-left: 9px; white-space: pre; background: linear-gradient(#fafafa, #f0f0f0); }
.hint { flex: 1; padding-left: 2px; background: linear-gradient(#fafafa, #f0f0f0); }

.status { height: 21px; display: flex; gap: 2px; flex: none; }
.status span { border: 1px solid #d4d4d4; background: linear-gradient(#fdfdfd, #f2f2f2); padding: 1px; white-space: nowrap; }
.s1 { width: 148px; } .s2 { width: 78px; } .s3 { width: 98px; } .s4 { width: 48px; } .s5 { flex: 1; } .s6 { width: 71px; }

.taskbar { height: 40px; background: #030c10; display: flex; flex: none; color: #fff; }
.start { width: 48px; display: flex; align-items: center; justify-content: center; background: #000; }
.cortana { width: 344px; background: #333; display: flex; align-items: center; padding: 0 14px 0 9px; gap: 5px; }
.cortana input { flex: 1; min-width: 0; background: none; border: 0; padding: 0; font: 14px/20px "Noto Sans", "Noto Sans CJK SC", sans-serif; color: #fff; }
.cortana input::placeholder { color: #9a9a9a; }
.apps { display: flex; gap: 2px; padding-left: 1px; }
.apps button { width: 48px; display: flex; align-items: center; justify-content: center; border-bottom: 2px solid transparent; }
.run { position: relative; }
.run::after { content: ""; position: absolute; left: 4px; right: 4px; bottom: -2px; height: 2px; background: #76b9ed; }
.active { background: #3a4648; }
.active::after { left: 0; right: 0; }
.tray { margin-left: auto; display: flex; align-items: center; gap: 9px; padding-right: 24px; }
.lang { font-size: 14px; }
.tray time { display: flex; flex-direction: column; align-items: center; line-height: 19px; margin: 0 9px; }

.ime { position: absolute; left: 825px; top: 29px; display: flex; }
.ime .s { position: relative; z-index: 1; }
.imebar { display: flex; align-items: center; gap: 7px; height: 24px; width: 170px; margin: 3px 0 0 -14px; padding-left: 18px; background: #fff; border: 1px solid #b4c8dc; }
.imebar b { color: #1a76c8; font-size: 14px; }
.ball { position: absolute; right: -28px; top: 86px; width: 46px; height: 46px; border-radius: 50%; border: 2px solid #dcdcdc; background: radial-gradient(#5fdc70, #27a644); box-shadow: 0 0 3px #888; color: #fff; font: bold 11px/42px "Liberation Sans", sans-serif; padding-left: 2px; }
.ring { position: absolute; border: 3px solid #f00; border-radius: 50%; pointer-events: none; }
.ring-nav { left: 11px; top: 178px; width: 146px; height: 41px; }
.ring-prop { left: 546px; top: 183px; width: 105px; height: 46px; }
```
